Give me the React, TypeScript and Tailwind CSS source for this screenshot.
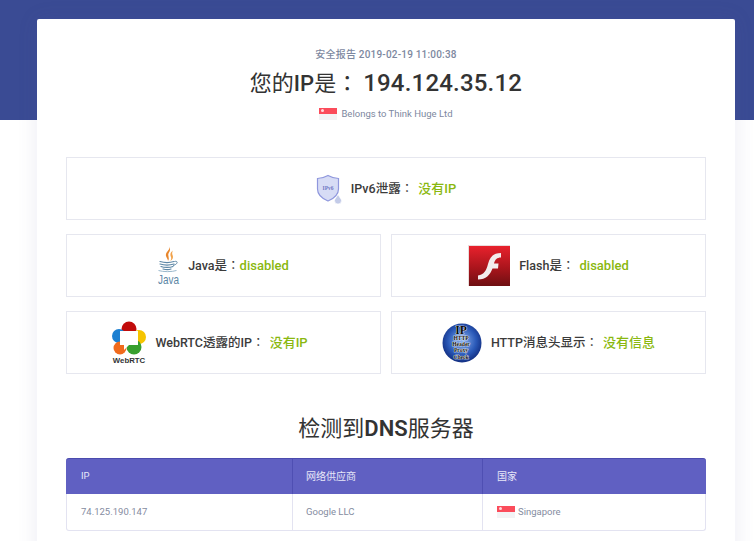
import React from 'react'

const Flag: React.FC<{ className?: string }> = ({ className }) => (
  <span className={`inline-flex flex-col shrink-0 w-[18px] h-[12px] ${className ?? ''}`}>
    <span className="relative h-1/2 bg-[#fb4c5b]">
      <span className="absolute left-[2px] top-[1px] w-[3px] h-[3px] rounded-full bg-[#ffd9dc]" />
    </span>
    <span className="h-1/2 bg-[#f3f3f5]" />
  </span>
)

// the colon sits centred in its cell in the picture, the JP face draws it that way
const Colon = () => <span className="font-['Noto_Sans_CJK_JP',sans-serif] font-normal">：</span>

const ShieldIcon = () => (
  <svg width="26" height="30" viewBox="0 0 26 30" className="shrink-0">
    <path d="M12 1.5 C8.5 3.5 5 4.3 1.5 4.5 L1.5 15 C1.5 21 6 24.5 12 27 C18 24.5 22.5 21 22.5 15 L22.5 4.5 C19 4.3 15.5 3.5 12 1.5 Z" fill="#d7dcf5" stroke="#8f97dd" strokeWidth="1.2" />
    <text x="12" y="15.5" textAnchor="middle" fontSize="5.5" fontWeight="700" fill="#6f78c4" fontFamily="'Liberation Serif', serif">IPv6</text>
    <path d="M22 20.5 C20 24 18.5 25.5 18.5 26.5 A3.5 3.5 0 0 0 25.5 26.5 C25.5 25.5 24 24 22 20.5 Z" fill="#c3cbe8" stroke="#fff" strokeWidth="0.6" />
  </svg>
)

const JavaIcon = () => (
  <svg width="21" height="42" viewBox="0 0 21 42" className="shrink-0 overflow-visible">
    <path d="M11 1 C13 5 7 7 8 11 C8.5 13 10 14 10 16 C12 13 9.5 11 10.5 8.5 C11.5 6.5 13 5 11 1 Z" fill="#e8862c" />
    <path d="M15 5.5 C12 7.5 12 10 13 12 C13.5 13.5 13 15 12 16 C15 14.5 15.5 12 14.5 10 C14 8.5 14 7 15 5.5 Z" fill="#f1a24b" />
    <path d="M2 16.5 C6 17.7 12 17.7 16 16.5 M2 19 C6 20.2 12 20.2 16 19 M3 21.5 C6 22.7 12 22.7 15 21.5 M5 24 C8 24.8 11 24.8 13 24" fill="none" stroke="#5d87a6" strokeWidth="1.2" strokeLinecap="round" />
    <path d="M16.5 16.5 C20 15.5 20.5 19 15 20.5" fill="none" stroke="#5d87a6" strokeWidth="1" />
    <path d="M0.5 25.5 C5 27 14 27 18.5 25.5" fill="none" stroke="#8fb0c6" strokeWidth="0.9" />
    <text x="10.5" y="39" textAnchor="middle" fontSize="13" textLength="21" lengthAdjust="spacingAndGlyphs" fill="#5d87a6" fontFamily="'Liberation Sans', sans-serif">Java</text>
  </svg>
)

const FlashIcon = () => (
  <svg width="42" height="41" viewBox="0 0 42 41" className="shrink-0">
    <defs>
      <linearGradient id="flashRed" x1="0" y1="0" x2="0" y2="1">
        <stop offset="0" stopColor="#e8212c" />
        <stop offset="0.55" stopColor="#aa151c" />
        <stop offset="1" stopColor="#6e0f12" />
      </linearGradient>
    </defs>
    <rect x="0" y="0" width="42" height="41" fill="#e9dcdc" />
    <rect x="1" y="1" width="41" height="40" fill="url(#flashRed)" />
    <path d="M33 8 C25 8 22 12 20 19 C18.5 25 16 30 10 30.5 L10 34.5 C18 34.5 22 30 24.5 23.5 L30 23.5 L30.5 18.5 L26 18.5 C27 14.5 29 12.5 33 12.5 Z" fill="#f3eded" />
  </svg>
)

const WebRTCIcon = () => (
  <svg width="34" height="44" viewBox="0 0 34 44" className="shrink-0">
    <circle cx="17" cy="8" r="7.5" fill="#c10b0b" />
    <circle cx="7" cy="15" r="7" fill="#1c7fd1" />
    <circle cx="27" cy="16" r="7" fill="#f5c400" />
    <circle cx="22" cy="26" r="7.5" fill="#38a02f" />
    <circle cx="8" cy="27" r="6.5" fill="#f06a1c" />
    <path d="M8 10 L26 10 L26 24 L17 24 L12 29 L12 24 L8 24 Z" fill="#fff" />
    <text x="17" y="41.5" textAnchor="middle" fontSize="7.8" fontWeight="700" fill="#333" fontFamily="'Liberation Sans', sans-serif">WebRTC</text>
  </svg>
)

const ProxyIcon = () => (
  <svg width="40" height="40" viewBox="0 0 40 40" className="shrink-0">
    <defs>
      <radialGradient id="globe" cx="0.5" cy="0.45" r="0.6">
        <stop offset="0" stopColor="#8db4ee" />
        <stop offset="0.6" stopColor="#2a59b8" />
        <stop offset="1" stopColor="#0c2373" />
      </radialGradient>
    </defs>
    <circle cx="20" cy="20" r="19.5" fill="url(#globe)" />
    <g fontFamily="'Liberation Serif', serif" fontWeight="700" textAnchor="middle" fill="#0b0b0b" stroke="#fff" strokeWidth="0.7" paintOrder="stroke">
      <text x="19" y="10.5" fontSize="11.5">IP</text>
      <text x="19" y="17" fontSize="5.6">HTTP</text>
      <text x="19" y="23" fontSize="5.6">Header</text>
      <text x="19" y="29" fontSize="5.6">Proxy</text>
      <text x="19" y="35.5" fontSize="5.6">Check</text>
    </g>
  </svg>
)

interface CheckBox {
  label: string
  value: string
  spaced: boolean
  layout: string
  icon: React.ReactNode
}

const checks: CheckBox[] = [
  { label: 'Java是', value: 'disabled', spaced: false, layout: 'gap-[9px]', icon: <JavaIcon /> },
  { label: 'Flash是', value: 'disabled', spaced: true, layout: 'gap-[9px]', icon: <FlashIcon /> },
  { label: 'WebRTC透露的IP', value: '没有IP', spaced: true, layout: 'gap-[9px] pr-[27px]', icon: <WebRTCIcon /> },
  { label: 'HTTP消息头显示', value: '没有信息', spaced: true, layout: 'gap-[9px]', icon: <ProxyIcon /> },
]

const Check: React.FC<CheckBox> = ({ label, value, spaced, layout, icon }) => (
  <div className={`h-[63px] border border-[#e6e7ef] flex items-center justify-center ${layout} text-[12.5px] font-medium text-[#3b3b3b]`}>
    {icon}
    <span className="whitespace-pre">
      {label}
      <Colon />
      {spaced ? ' ' : ''}
      <span className={`text-[13px] text-[#8ab80f] ${spaced ? 'ml-[2px]' : ''}`}>{value}</span>
    </span>
  </div>
)

export default function App() {
  return (
    <div className="h-[541px] overflow-hidden bg-white font-['Roboto','Noto_Sans_CJK_SC',sans-serif]">
      <div className="h-[120px] bg-[#3a4b94]" />
      <div className="relative -mt-[101px] ml-[37px] w-[698px] h-[600px] rounded-[2px] bg-white px-[29px] shadow-[0_0_20px_rgba(90,90,160,0.12)]">
        <div className="pt-[29px] flex flex-col items-center">
          <p className="text-[10px] leading-[14px] tracking-[0.2px] font-medium text-[#7d88a0]">安全报告 2019-02-19 11:00:38</p>
          <h1 className="mt-[3px] text-[22px] leading-[32px] font-normal text-[#333] whitespace-pre">
            您的<span className="font-medium">IP</span>是
            <Colon />
            <span className="ml-[5px] text-[24px] font-medium tracking-[0.2px]">194.124.35.12</span>
          </h1>
          <div className="mt-[8px] flex items-center gap-[4px] text-[9.5px] leading-[12px] text-[#7d88a0]">
            <Flag />
            <span>Belongs to Think Huge Ltd</span>
          </div>
        </div>

        <div className="mt-[37px] h-[63px] border border-[#e6e7ef] flex items-center justify-center gap-[9px] text-[12.5px] font-medium text-[#3b3b3b]">
          <ShieldIcon />
          <span className="whitespace-pre">
            IPv6泄露
            <Colon /> <span className="ml-[2px] text-[13px] text-[#8ab80f]">没有IP</span>
          </span>
        </div>

        <div className="mt-[14px] grid grid-cols-2 gap-x-[10px] gap-y-[14px]">
          {checks.map((c) => (
            <Check key={c.label} {...c} />
          ))}
        </div>

        <h2 className="mt-[38px] text-center text-[22px] leading-[34px] font-normal text-[#333]">
          检测到<span className="font-semibold">DNS</span>服务器
        </h2>

        <div className="mt-[12px] rounded-[3px] border-x border-b border-[#e3e3f1] text-[9.5px]">
          <div className="-mx-px grid grid-cols-[227px_190px_223px] h-[36px] rounded-t-[3px] bg-[#6060c2] border-t border-[#4b4bae] text-[#e8e8f8]">
            <div className="flex items-center pl-[15px] border-r border-[#4f4fb3]">IP</div>
            <div className="flex items-center pl-[13px] border-r border-[#4f4fb3] text-[10px]">网络供应商</div>
            <div className="flex items-center pl-[14px] text-[10px]">国家</div>
          </div>
          <div className="-mx-px grid grid-cols-[227px_190px_223px] h-[36px] text-[#858c9f]">
            <div className="flex items-center pl-[15px] border-r border-[#e3e3f1]">74.125.190.147</div>
            <div className="flex items-center pl-[13px] border-r border-[#e3e3f1]">Google LLC</div>
            <div className="flex items-center pl-[14px] gap-[3px]">
              <Flag />
              <span>Singapore</span>
            </div>
          </div>
        </div>
      </div>
    </div>
  )
}
